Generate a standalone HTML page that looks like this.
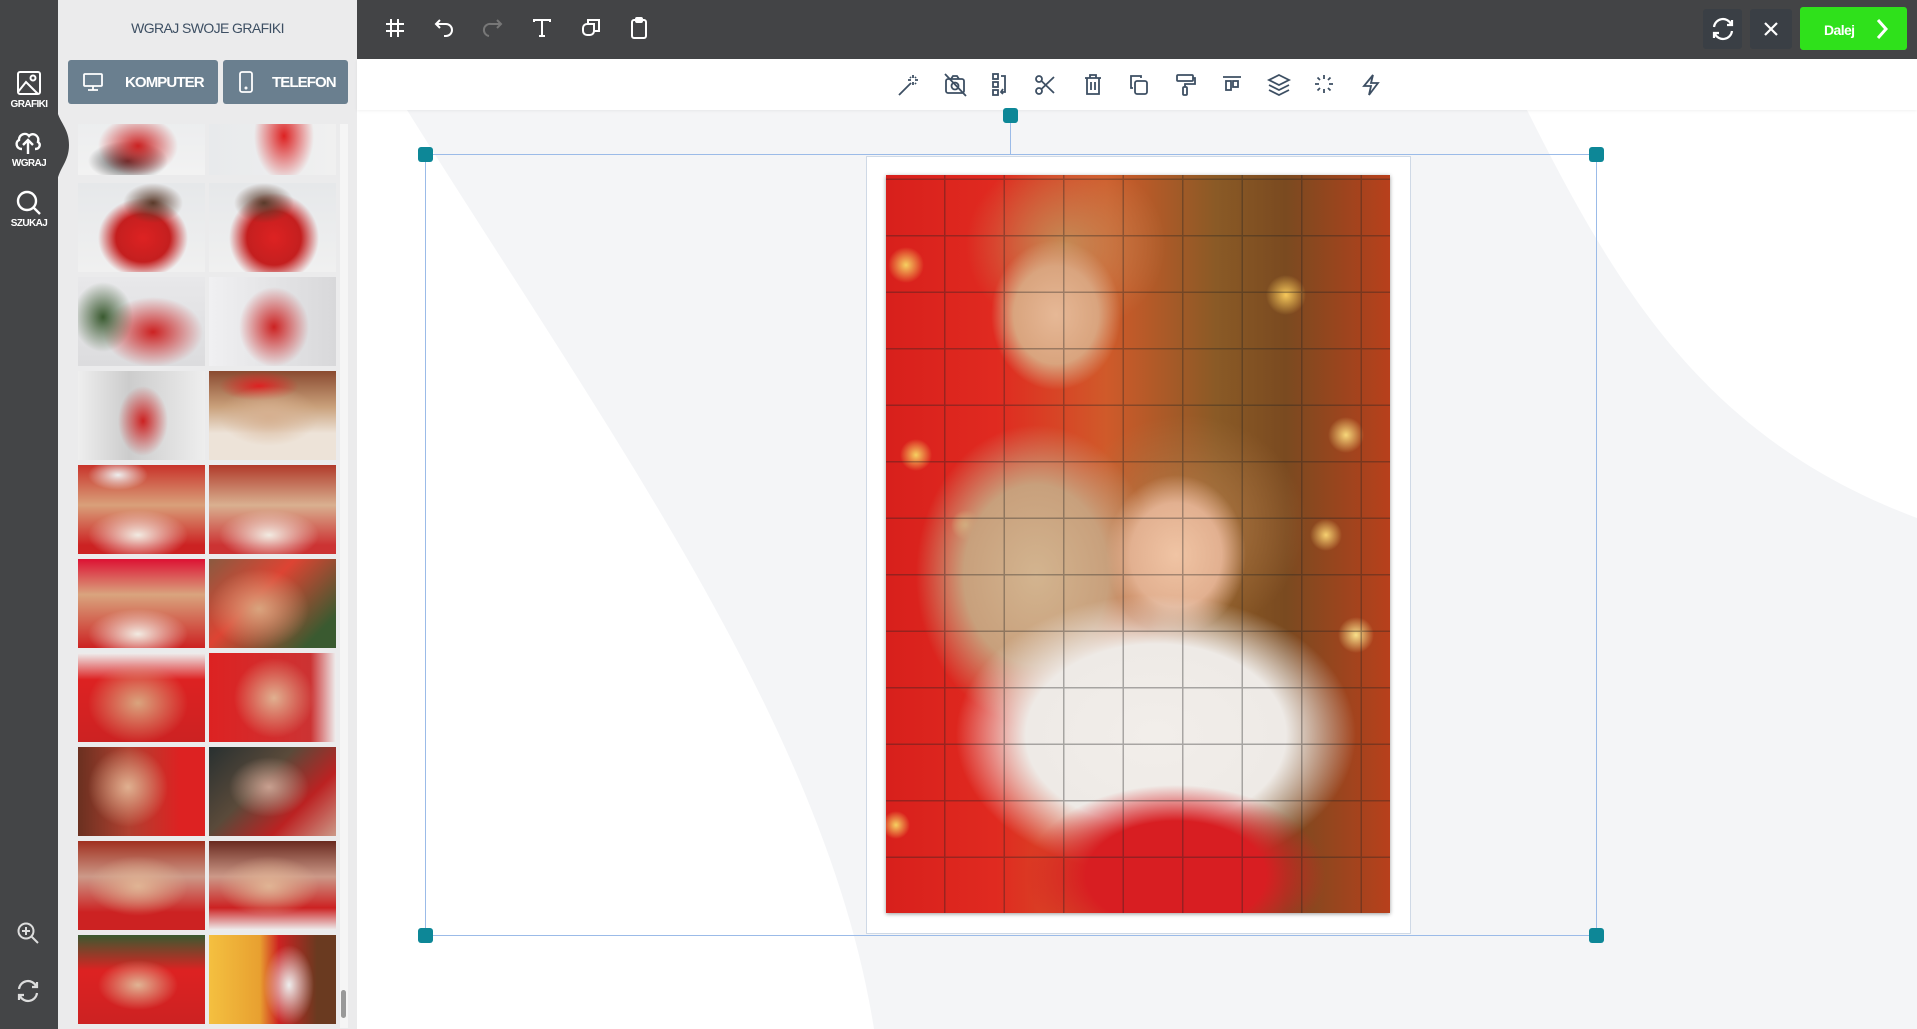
<!DOCTYPE html>
<html><head><meta charset="utf-8">
<style>
*{margin:0;padding:0;box-sizing:border-box}
body{width:1917px;height:1029px;overflow:hidden;font-family:"Liberation Sans",sans-serif;background:#f4f5f7;position:relative}
.abs{position:absolute}
#side{left:0;top:0;width:58px;height:1029px;background:#444547}
.sb{position:absolute;left:0;width:58px;text-align:center;color:#fff;font-size:10px;font-weight:bold;letter-spacing:-.6px}
#panel{left:58px;top:0;width:299px;height:1029px;background:#ebebec}
#top{left:357px;top:0;width:1560px;height:59px;background:#434446}
#tool{left:357px;top:59px;width:1560px;height:51px;background:#fff;box-shadow:0 1px 3px rgba(0,0,0,.06)}
.btn{position:absolute;top:60px;height:44px;background:#6a7f8f;border-radius:3px;color:#fff;font-weight:bold;font-size:15px;letter-spacing:-.9px;display:flex;align-items:center}
.th{position:absolute;width:127px;height:89px}
.ic{position:absolute}
.h{position:absolute;width:15px;height:15px;background:#0d8797;border-radius:3px}
</style></head><body>
<svg class="abs" style="left:357px;top:110px" width="1560" height="919">
<rect width="1560" height="919" fill="#f4f5f7"/>
<path d="M0 0 L50 0 C250 320 470 620 517 919 L0 919Z" fill="#fff"/>
<path d="M1170 0 C1260 180 1350 330 1560 408 L1560 0Z" fill="#fff"/>
</svg>
<div id="panel" class="abs">
<div class="abs" style="left:0;top:20px;width:299px;text-align:center;color:#3d4f63;font-size:14px;letter-spacing:-.6px">WGRAJ SWOJE GRAFIKI</div>
<div class="btn" style="left:10px;width:150px"><svg style="margin-left:14px" width="22" height="22" viewBox="0 0 22 22" fill="none" stroke="#fff" stroke-width="1.8"><rect x="2" y="3" width="18" height="12" rx="1"/><path d="M11 15 V19 M6 19 H16"/></svg><span style="margin-left:21px">KOMPUTER</span></div>
<div class="btn" style="left:165px;width:125px"><svg style="margin-left:15px" width="16" height="24" viewBox="0 0 16 24" fill="none" stroke="#fff" stroke-width="1.8"><rect x="2" y="2" width="12" height="20" rx="2"/><circle cx="8" cy="18" r=".6"/></svg><span style="margin-left:18px">TELEFON</span></div>
<div class="abs" style="left:282px;top:124px;width:8px;height:904px;background:#f5f5f5"></div>
<div class="abs" style="left:283px;top:990px;width:5px;height:28px;background:#999;border-radius:3px"></div>
</div>
<div id="side" class="abs">
<svg class="abs" style="left:57px;top:110px" width="14" height="80"><path d="M0 0 C2 12 12 18 12 35 C12 52 2 58 0 72Z" fill="#444547"/></svg>
<svg class="ic" style="left:16px;top:70px" width="26" height="26" viewBox="0 0 26 26" fill="none" stroke="#fff" stroke-width="2"><rect x="2" y="2" width="22" height="22" rx="2"/><circle cx="17" cy="8" r="2.5"/><path d="M2 22 L10 12 L22 24"/></svg>
<div class="sb" style="top:99px">GRAFIKI</div>
<svg class="ic" style="left:13px;top:129px" width="30" height="26" viewBox="0 0 30 26" fill="none" stroke="#fff" stroke-width="2.4"><path d="M9 20 C3 20 2 13 6 11 C6 5 13 3 16 7 C19 3 27 6 25 13 C28 15 27 20 22 20"/><path d="M15 25 V12 M10 16 L15 11 L20 16"/></svg>
<div class="sb" style="top:158px">WGRAJ</div>
<svg class="ic" style="left:15px;top:189px" width="28" height="28" viewBox="0 0 28 28" fill="none" stroke="#fff" stroke-width="2.4"><circle cx="12" cy="12" r="9"/><path d="M18.5 18.5 L25 25"/></svg>
<div class="sb" style="top:218px">SZUKAJ</div>
<svg class="ic" style="left:16px;top:921px" width="24" height="24" viewBox="0 0 24 24" fill="none" stroke="#ddd" stroke-width="2"><circle cx="10" cy="10" r="7.5"/><path d="M15.5 15.5 L22 22 M10 6 V14 M6 10 H14"/></svg>
<svg class="ic" style="left:15px;top:979px" width="26" height="24" viewBox="0 0 26 24" fill="none" stroke="#ddd" stroke-width="2.2"><path d="M4 10 A9 9 0 0 1 21 7 M22 3 V8 H17"/><path d="M22 14 A9 9 0 0 1 5 17 M4 21 V16 H9"/></svg>
</div>
<div id="top" class="abs">
<svg class="ic" style="left:27px;top:17px" width="22" height="22" viewBox="0 0 22 22" stroke="#fff" stroke-width="2" fill="none"><path d="M7 2 V20 M14 2 V20 M2 7 H20 M2 14 H20"/></svg>
<svg class="ic" style="left:76px;top:17px" width="22" height="22" viewBox="0 0 22 22" stroke="#fff" stroke-width="2" fill="none"><path d="M7 3 L3 7 L7 11 M3 7 H13 A6 6 0 0 1 13 19 H11"/></svg>
<svg class="ic" style="left:125px;top:17px" width="22" height="22" viewBox="0 0 22 22" stroke="#777" stroke-width="2" fill="none"><path d="M15 3 L19 7 L15 11 M19 7 H9 A6 6 0 0 0 7 19"/></svg>
<svg class="ic" style="left:174px;top:17px" width="22" height="22" viewBox="0 0 22 22" stroke="#fff" stroke-width="2" fill="none"><path d="M3 5 V3 H19 V5 M11 3 V19 M8 19 H14"/></svg>
<svg class="ic" style="left:223px;top:17px" width="22" height="22" viewBox="0 0 22 22" stroke="#fff" stroke-width="2" fill="none"><path d="M8 7 V3 H19 V14 H14"/><path d="M3 11 A4 4 0 0 1 7 7 H14 V14 A4 4 0 0 1 10 18 H7 A4 4 0 0 1 3 14Z"/></svg>
<svg class="ic" style="left:271px;top:16px" width="22" height="24" viewBox="0 0 22 24" stroke="#fff" stroke-width="2" fill="none"><rect x="4" y="4" width="14" height="18" rx="2"/><rect x="8" y="2" width="6" height="4" rx="1"/></svg>
<div class="abs" style="left:1346px;top:9px;width:39px;height:40px;background:#3a3f45;border-radius:3px"></div>
<svg class="ic" style="left:1354px;top:17px" width="24" height="24" viewBox="0 0 24 24" fill="none" stroke="#fff" stroke-width="2.2"><path d="M3 10 A9 9 0 0 1 20 7 M21 3 V8 H16"/><path d="M21 14 A9 9 0 0 1 4 17 M3 21 V16 H8"/></svg>
<div class="abs" style="left:1393px;top:9px;width:42px;height:40px;background:#3a3f45;border-radius:3px"></div>
<svg class="ic" style="left:1406px;top:21px" width="16" height="16" viewBox="0 0 16 16" stroke="#fff" stroke-width="2.2"><path d="M2 2 L14 14 M14 2 L2 14"/></svg>
<div class="abs" style="left:1443px;top:7px;width:107px;height:43px;background:#2fe11b;border-radius:3px;color:#fff;font-weight:bold;font-size:14px;letter-spacing:-.6px;padding:15px 0 0 24px">Dalej</div>
<svg class="ic" style="left:1518px;top:18px" width="14" height="22" viewBox="0 0 14 22" stroke="#fff" stroke-width="3" fill="none"><path d="M3 2 L11 11 L3 20"/></svg>
</div>
<div id="tool" class="abs">
<svg class="ic" style="left:540px;top:14px" width="510" height="24" viewBox="0 0 510 24" fill="none" stroke="#3d4f63" stroke-width="1.8">
<g><path d="M2 22 L14 10 M16 2 V5 M16 9 V12 M11 7 H14 M18 7 H21 M13 4 L14 5 M19 4 L18 5 M19 11 L18 10"/></g>
<g transform="translate(47 0)"><rect x="2" y="6" width="18" height="14" rx="2"/><circle cx="11" cy="13" r="3.5"/><path d="M7 6 L9 3 H13 L15 6 M1 1 L22 23"/></g>
<g transform="translate(92 0)"><rect x="4" y="1" width="5" height="5"/><rect x="4" y="9" width="5" height="5"/><rect x="4" y="17" width="5" height="5"/><path d="M12 3 H16 V19 H12 M14 16 L12 19 L14 21"/></g>
<g transform="translate(137 0)"><circle cx="5" cy="6" r="3"/><circle cx="5" cy="18" r="3"/><path d="M7.5 8 L20 20 M7.5 16 L20 4"/></g>
<g transform="translate(185 0)"><path d="M3 5 H19 M8 5 V2 H14 V5 M5 5 V21 H17 V5 M9 9 V17 M13 9 V17"/></g>
<g transform="translate(230 0)"><path d="M6 15 H4 V3 H14 V5"/><rect x="8" y="8" width="12" height="13" rx="2"/></g>
<g transform="translate(277 0)"><rect x="3" y="2" width="16" height="6" rx="1"/><path d="M19 5 H21 V11 H11 V14"/><rect x="9" y="14" width="4" height="8" rx="1"/></g>
<g transform="translate(324 0)"><path d="M2 4 H20"/><rect x="5" y="8" width="5" height="9"/><rect x="12" y="8" width="5" height="6"/></g>
<g transform="translate(371 0)"><path d="M11 2 L21 7 L11 12 L1 7Z M1 12 L11 17 L21 12 M1 17 L11 22 L21 17"/></g>
<g transform="translate(416 0)"><path d="M11 2 V6 M11 16 V20 M2 11 H6 M16 11 H20 M4.5 4.5 L7 7 M15 15 L17.5 17.5 M4.5 17.5 L7 15 M15 7 L17.5 4.5"/></g>
<g transform="translate(463 0)"><path d="M13 2 L4 13 H11 L9 22 L18 10 H11 Z"/></g>
</svg>
</div>
<div class="abs" style="left:1010px;top:116px;width:1px;height:38px;background:#9bbbe8"></div>
<div class="abs" style="left:425px;top:154px;width:1172px;height:782px;border:1px solid #9bbbe8"></div>
<div class="abs" style="left:866px;top:156px;width:545px;height:778px;background:#fff;border:1px solid #cfd9e6"></div>
<div class="abs" style="left:886px;top:175px;width:504px;height:738px;overflow:hidden;box-shadow:0 1px 4px rgba(0,0,0,.4);
background:
radial-gradient(ellipse 60px 40px at 380px 920px,#d22 0,transparent 100%),
radial-gradient(ellipse 150px 90px at 290px 700px,#d81e22 0,#d81e22 60%,transparent 100%),
radial-gradient(ellipse 200px 140px at 270px 560px,#f2eeea 0,#eeeae6 65%,transparent 100%),
radial-gradient(ellipse 70px 80px at 290px 380px,#f0c4a4 0,#e2b090 65%,transparent 100%),
radial-gradient(ellipse 65px 75px at 170px 140px,#e6b896 0,#d9a47e 65%,transparent 100%),
radial-gradient(ellipse 100px 90px at 180px 70px,#c58a55 0,transparent 100%),
radial-gradient(ellipse 120px 150px at 150px 400px,#d3b48f 0,#c8a07c 60%,transparent 100%),
radial-gradient(ellipse 120px 110px at 300px 350px,#b07a48 0,transparent 100%),
radial-gradient(circle at 460px 260px,#f7d77a 0,transparent 18px),
radial-gradient(circle at 400px 120px,#f6c85a 0,transparent 20px),
radial-gradient(circle at 470px 460px,#f8e08a 0,transparent 18px),
radial-gradient(circle at 440px 360px,#f6d070 0,transparent 16px),
radial-gradient(circle at 20px 90px,#f6d060 0,transparent 18px),
radial-gradient(circle at 30px 280px,#f6d060 0,transparent 16px),
radial-gradient(circle at 80px 350px,#f8e08a 0,transparent 15px),
radial-gradient(circle at 10px 650px,#f6d060 0,transparent 14px),
linear-gradient(90deg,#d8201c 0,#e02a20 110px,#d05a2a 220px,#8a5a26 330px,#7a4a20 400px,#b8401c 504px)">
<div class="abs" style="inset:0;opacity:.35;background:repeating-linear-gradient(90deg,transparent 0,transparent 58px,#222 58px,#222 59.5px),repeating-linear-gradient(0deg,transparent 0,transparent 55px,#222 55px,#222 56.5px)"></div>
</div>
<div class="h" style="left:1003px;top:108px"></div>
<div class="h" style="left:418px;top:147px"></div>
<div class="h" style="left:1589px;top:147px"></div>
<div class="h" style="left:418px;top:928px"></div>
<div class="h" style="left:1589px;top:928px"></div>
<div class="abs" style="left:78px;top:124px;width:258px;height:905px;overflow:hidden">
<div class="th" style="left:0;top:-38px;background:radial-gradient(ellipse 40px 30px at 60px 60px,#c22 0,transparent 100%),radial-gradient(ellipse 40px 20px at 50px 75px,#333 0,transparent 100%),linear-gradient(#e8eaec,#f2f2f2)"></div>
<div class="th" style="left:131px;top:-38px;background:radial-gradient(ellipse 30px 45px at 75px 50px,#d22 0,transparent 100%),linear-gradient(90deg,#e8eaec,#f0f0f0)"></div>
<div class="th" style="left:0;top:59px;background:radial-gradient(ellipse 30px 20px at 75px 20px,#5a3a2a 0,transparent 100%),radial-gradient(ellipse 45px 40px at 65px 55px,#d22 0,#c41f1f 60%,transparent 100%),linear-gradient(#e6e8ea,#f0f0f0)"></div>
<div class="th" style="left:131px;top:59px;background:radial-gradient(ellipse 30px 20px at 55px 20px,#5a3a2a 0,transparent 100%),radial-gradient(ellipse 45px 45px at 65px 55px,#d22 0,#c41f1f 60%,transparent 100%),linear-gradient(#e6e8ea,#f0f0f0)"></div>
<div class="th" style="left:0;top:153px;background:radial-gradient(ellipse 30px 35px at 25px 40px,#3a5a30 0,transparent 100%),radial-gradient(ellipse 50px 35px at 75px 55px,#c22 0,transparent 100%),linear-gradient(#e8e8ea,#dcdcde)"></div>
<div class="th" style="left:131px;top:153px;background:radial-gradient(ellipse 35px 40px at 65px 50px,#c22 0,transparent 100%),linear-gradient(90deg,#f0f0f2,#d8d8da)"></div>
<div class="th" style="left:0;top:247px;background:radial-gradient(ellipse 25px 35px at 65px 50px,#c22 0,transparent 100%),linear-gradient(90deg,#eee,#ccc 40%,#eee)"></div>
<div class="th" style="left:131px;top:247px;background:radial-gradient(ellipse 50px 30px at 60px 45px,#d6b090 0,transparent 100%),radial-gradient(ellipse 40px 15px at 50px 15px,#d22 0,transparent 100%),linear-gradient(180deg,#8a4a30,#c9a07a 40%,#ede3d8 70%)"></div>
<div class="th" style="left:0;top:341px;background:radial-gradient(ellipse 30px 15px at 40px 10px,#eee 0,transparent 100%),radial-gradient(ellipse 50px 25px at 60px 70px,#f2ebe2 0,transparent 100%),linear-gradient(180deg,#c8332a,#d9a07a 45%,#c22 90%)"></div>
<div class="th" style="left:131px;top:341px;background:radial-gradient(ellipse 50px 25px at 60px 70px,#f2ebe2 0,transparent 100%),linear-gradient(180deg,#b03a2a,#d9b090 45%,#c33 90%)"></div>
<div class="th" style="left:0;top:435px;background:radial-gradient(ellipse 50px 25px at 60px 75px,#f2ebe2 0,transparent 100%),linear-gradient(180deg,#d13 0,#d9a47e 40%,#c22 100%)"></div>
<div class="th" style="left:131px;top:435px;background:radial-gradient(ellipse 50px 40px at 50px 50px,#d9a47e 0,transparent 100%),linear-gradient(135deg,#8a5a40 0,#d43 40%,#3a5a30 85%)"></div>
<div class="th" style="left:0;top:529px;background:radial-gradient(ellipse 50px 40px at 60px 50px,#d9a47e 0,transparent 100%),linear-gradient(180deg,#eee 0,#d22 30%,#c22 100%)"></div>
<div class="th" style="left:131px;top:529px;background:radial-gradient(ellipse 40px 40px at 65px 45px,#e0b090 0,transparent 100%),linear-gradient(90deg,#d22 0,#c33 80%,#eee)"></div>
<div class="th" style="left:0;top:623px;background:radial-gradient(ellipse 40px 40px at 50px 40px,#e0b090 0,transparent 100%),linear-gradient(90deg,#6a3020 0,#b04030 40%,#d22 80%)"></div>
<div class="th" style="left:131px;top:623px;background:radial-gradient(ellipse 40px 30px at 60px 40px,#c8a090 0,transparent 100%),linear-gradient(135deg,#283030 0,#5a4a3a 40%,#b22 70%,#c98)"></div>
<div class="th" style="left:0;top:717px;background:radial-gradient(ellipse 50px 30px at 60px 45px,#e0b494 0,transparent 100%),linear-gradient(180deg,#a03020 0,#c98 40%,#c22 80%)"></div>
<div class="th" style="left:131px;top:717px;background:radial-gradient(ellipse 50px 30px at 60px 45px,#e0b494 0,transparent 100%),linear-gradient(180deg,#6a2a20 0,#c98 40%,#c22 75%,#eee)"></div>
<div class="th" style="left:0;top:811px;background:radial-gradient(ellipse 40px 25px at 60px 50px,#e0b494 0,transparent 100%),linear-gradient(180deg,#3a5a30 0,#d22 40%,#c22 100%)"></div>
<div class="th" style="left:131px;top:811px;background:radial-gradient(ellipse 25px 40px at 80px 50px,#eee 0,transparent 100%),linear-gradient(90deg,#f4c040 0,#e8a030 40%,#c22 55%,#6a3a20 85%)"></div>
</div>
</body></html>
